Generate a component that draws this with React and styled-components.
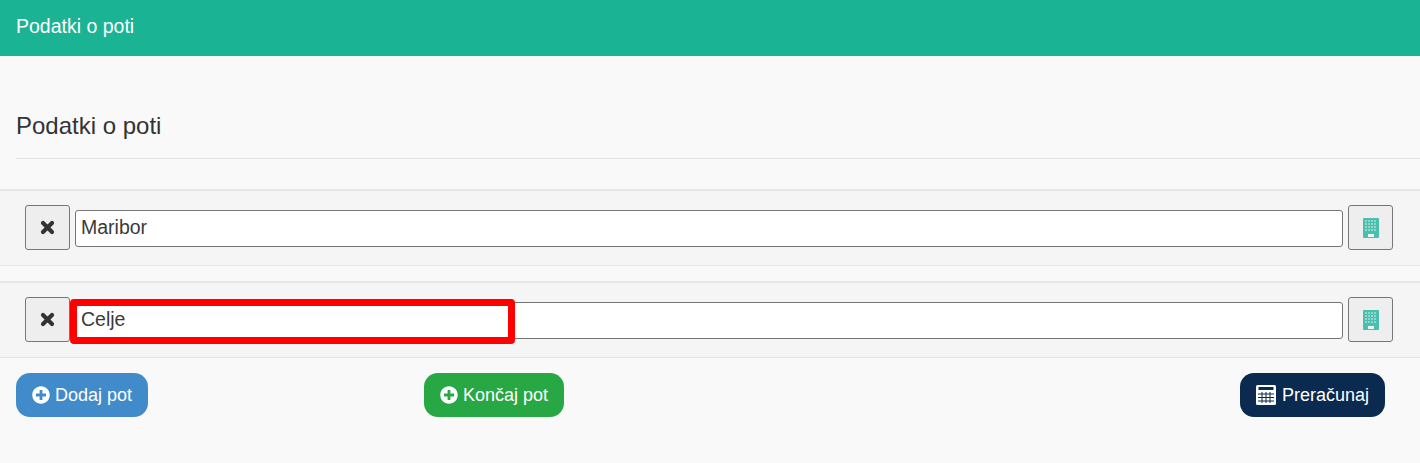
import styled, { createGlobalStyle } from 'styled-components'
import { FaPlusCircle } from 'react-icons/fa'

const GlobalStyle = createGlobalStyle`
   html, body {
      margin: 0;
      padding: 0;
      background: #f9f9f9;
      font-family: "Liberation Sans", Arial, sans-serif;
   }
`

const Page = styled.div`
   position: relative;
   height: 463px;
   overflow: hidden;
   background: #f9f9f9;
`

const TopBar = styled.header`
   height: 56px;
   box-sizing: border-box;
   padding: 0 16px 4px;
   display: flex;
   align-items: center;
   background: #1ab394;
   color: #fff;
   font-size: 19.5px;
`

const Title = styled.h2`
   margin: 0 0 0 16px;
   padding: 55px 0 0;
   height: 103px;
   box-sizing: border-box;
   border-bottom: 1px solid #e5e5e5;
   font-size: 24px;
   line-height: 29px;
   font-weight: 400;
   color: #333;
`

const Row = styled.div`
   display: flex;
   align-items: flex-start;
   height: 77px;
   box-sizing: border-box;
   margin-top: ${(props) => props.$top}px;
   padding: 14px 27px 0 25px;
   background: #f5f5f5;
   border-top: 2px solid #e6e6e6;
   border-bottom: 1px solid #e3e3e3;
`

const SquareButton = styled.button`
   flex: none;
   width: 45px;
   height: 45px;
   padding: 0;
   display: flex;
   align-items: center;
   justify-content: center;
   background: #eee;
   border: 1px solid #777;
   border-radius: 3px;
`

const PlaceInput = styled.input`
   flex: 1;
   min-width: 0;
   height: 37px;
   margin: 5px 5px 0;
   padding: 0 5px 2px;
   box-sizing: border-box;
   background: #fff;
   border: 1px solid #767676;
   border-radius: 3px;
   outline: none;
   color: #3a3a3a;
   font-family: inherit;
   font-size: 19.5px;
`

const Highlight = styled.div`
   position: absolute;
   left: 70px;
   top: 299px;
   width: 445px;
   height: 45px;
   box-sizing: border-box;
   border: 7px solid #ff0000;
   border-radius: 4px;
   pointer-events: none;
`

const Actions = styled.div`
   display: grid;
   grid-template-columns: 408px 816px auto;
   justify-items: start;
   padding: 15px 16px 0;
`

const ActionButton = styled.button`
   display: flex;
   align-items: center;
   gap: ${(props) => props.$gap || 5}px;
   height: 44px;
   padding: 0 16px;
   border: none;
   border-radius: 14px;
   background: ${(props) => props.$bg};
   color: #fff;
   font-family: inherit;
   font-size: 18px;
   white-space: nowrap;
`

const RemoveIcon = () => (
   <svg width="15" height="15" viewBox="0 0 15 15" style={{ marginRight: 1 }}>
      <path d="M3 3 12 12M12 3 3 12" stroke="#333" strokeWidth="4.2" strokeLinecap="round" />
   </svg>
)

const DeviceIcon = () => (
   <svg width="16" height="20" viewBox="0 0 16 20">
      <rect width="16" height="20" rx="1" fill="#4bbfae" />
      <g fill="#8fd8cc">
         {[2, 5, 8, 11].map((y) =>
            [2, 5, 8, 11].map((x) => <rect key={`${x}-${y}`} x={x} y={y} width="2" height="2" />),
         )}
      </g>
      <rect x="5" y="16" width="6" height="3" fill="#e6f7f4" />
   </svg>
)

const CalculatorIcon = () => (
   <svg width="20" height="20" viewBox="0 0 20 20">
      <rect width="20" height="20" rx="1.5" fill="#fff" />
      <rect x="2.5" y="2" width="15" height="3" fill="#0a2a4f" />
      <path d="M2 9H18M2 12.5H18M2 16H18M6 7V18M10 7V18M14 7V18" stroke="#0a2a4f" strokeWidth="1" />
   </svg>
)

const places = [
   { name: 'Maribor', top: 30 },
   { name: 'Celje', top: 15 },
]

function App() {
   return (
      <Page>
         <GlobalStyle />
         <TopBar>Podatki o poti</TopBar>
         <Title>Podatki o poti</Title>
         {places.map((place) => (
            <Row key={place.name} $top={place.top}>
               <SquareButton>
                  <RemoveIcon />
               </SquareButton>
               <PlaceInput defaultValue={place.name} />
               <SquareButton>
                  <DeviceIcon />
               </SquareButton>
            </Row>
         ))}
         <Highlight />
         <Actions>
            <ActionButton $bg="#428bca">
               <FaPlusCircle size={18} />
               Dodaj pot
            </ActionButton>
            <ActionButton $bg="#28a745">
               <FaPlusCircle size={18} />
               Končaj pot
            </ActionButton>
            <ActionButton $bg="#0a2a4f" $gap={6}>
               <CalculatorIcon />
               Preračunaj
            </ActionButton>
         </Actions>
      </Page>
   )
}

export default App
